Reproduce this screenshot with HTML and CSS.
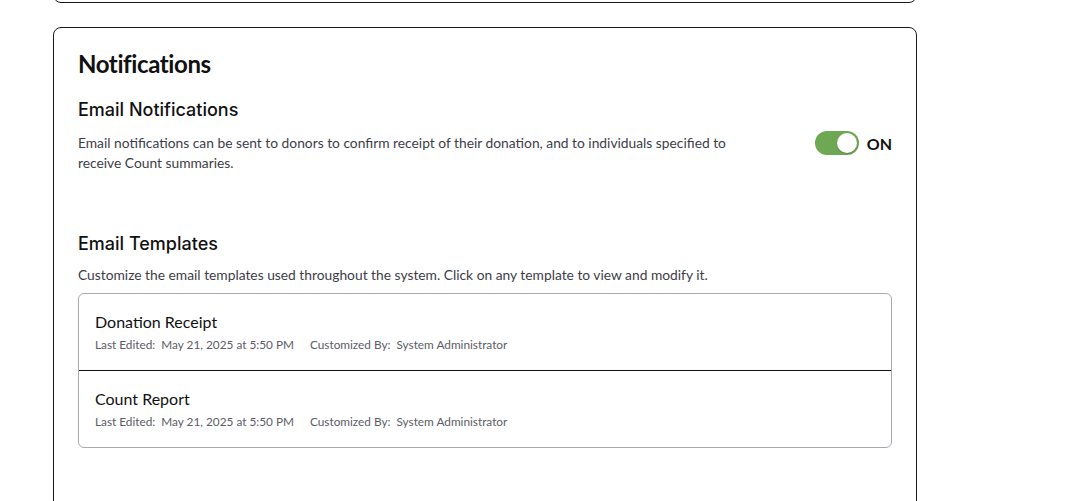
FILE: index.html
```html
<!DOCTYPE html>
<html>
<head>
<meta charset="utf-8">
<link rel="stylesheet" href="styles.css">
</head>
<body>
<div class="page">
  <div class="card card-prev"></div>
  <section class="card">
    <h2 class="card-title">Notifications</h2>
    <h3 class="section-title">Email Notifications</h3>
    <div class="row">
      <p class="desc desc-narrow">Email notifications can be sent to donors to confirm receipt of their donation, and to individuals specified to receive Count summaries.</p>
      <div class="toggle-wrap">
        <span class="toggle"><span class="knob"></span></span>
        <span class="toggle-label">ON</span>
      </div>
    </div>
    <h3 class="section-title templates-title">Email Templates</h3>
    <p class="desc desc-templates">Customize the email templates used throughout the system. Click on any template to view and modify it.</p>
    <div class="list">
      <div class="item">
        <div class="item-title">Donation Receipt</div>
        <div class="meta"><span>Last Edited:&nbsp; May 21, 2025 at 5:50 PM</span><span>Customized By:&nbsp; System Administrator</span></div>
      </div>
      <div class="item">
        <div class="item-title">Count Report</div>
        <div class="meta"><span>Last Edited:&nbsp; May 21, 2025 at 5:50 PM</span><span>Customized By:&nbsp; System Administrator</span></div>
      </div>
    </div>
  </section>
</div>
</body>
</html>
```

FILE: styles.css
```css
html, body {
  margin: 0;
  padding: 0;
  background: #fff;
}
body {
  font-family: Lato, "Open Sans", sans-serif;
  color: #111;
}
.page {
  width: 864px;
  margin-left: 53px;
  display: flex;
  flex-direction: column;
  gap: 24px;
}
.card {
  border: 1px solid #1a1a1a;
  border-radius: 8px;
  padding: 21px 24px 60px;
  box-sizing: border-box;
}
.card-prev {
  height: 40px;
  margin-top: -37px;
  padding: 0;
}
.card-title {
  margin: 0;
  font-size: 24px;
  font-weight: 700;
  letter-spacing: -0.4px;
  color: #111;
}
.section-title {
  margin: 21px 0 0;
  font-family: Inter, "Liberation Sans", sans-serif;
  font-size: 18px;
  font-weight: 500;
  color: #111;
}
.templates-title {
  margin-top: 60px;
}
.row {
  display: flex;
  align-items: flex-start;
  justify-content: space-between;
}
.desc {
  margin: 13px 0 0;
  font-size: 13.8px;
  line-height: 20px;
  color: #3d3d48;
}
.desc-templates {
  margin-top: 11px;
}
.desc-narrow {
  max-width: 660px;
}
.toggle-wrap {
  display: flex;
  align-items: center;
  gap: 8px;
  margin-top: 11px;
}
.toggle {
  display: flex;
  justify-content: flex-end;
  align-items: center;
  width: 44px;
  height: 24px;
  border-radius: 12px;
  background: #6ea852;
  box-sizing: border-box;
  padding: 2px;
}
.knob {
  width: 20px;
  height: 20px;
  border-radius: 50%;
  background: #fff;
  box-shadow: 0 1px 2px rgba(0,0,0,0.2);
}
.toggle-label {
  font-size: 16px;
  font-weight: 700;
  color: #111;
}
.list {
  margin-top: 8px;
  border: 1px solid #a9a9b2;
  border-radius: 6px;
}
.item {
  height: 58px;
  padding: 18px 16px 0;
}
.item + .item {
  border-top: 1px solid #111;
}
.item-title {
  font-size: 16px;
  color: #111;
  line-height: 20px;
}
.meta {
  margin-top: 5px;
  font-size: 11.8px;
  line-height: 16px;
  color: #5c5c66;
  display: flex;
  gap: 16px;
}
```
